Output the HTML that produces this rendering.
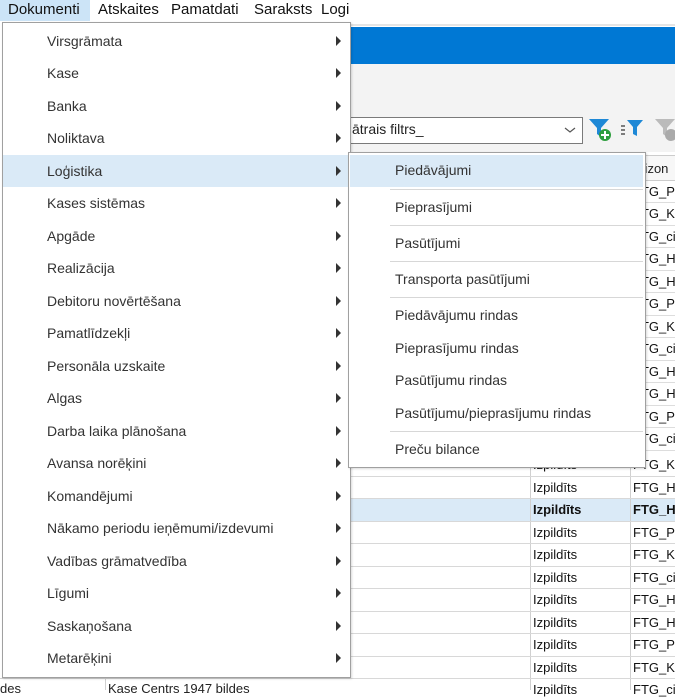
<!DOCTYPE html>
<html><head><meta charset="utf-8"><style>
*{margin:0;padding:0;box-sizing:border-box}
body{width:675px;height:690px;overflow:hidden;background:#fff;font-family:"Liberation Sans",sans-serif;font-size:14px;color:#222;position:relative}
.a{position:absolute}
.mb span{position:absolute;top:1px;font-size:15px;color:#111}
.mi{position:absolute;left:3px;width:346px;height:32px;}
.mi span{position:absolute;left:44px;top:8px;color:#333}
.mi i{position:absolute;left:333px;top:11px;width:0;height:0;border-left:5px solid #333;border-top:5px solid transparent;border-bottom:5px solid transparent}
.si{position:absolute;left:395px;color:#333}
.sep{position:absolute;left:390px;width:253px;height:1px;background:#d7d7d7}
.row{position:absolute;left:350px;width:325px;height:1px;background:#d8d8d8}
.c1{position:absolute;left:533px;font-size:13px;color:#111}
.c2{position:absolute;left:633px;font-size:13px;color:#111;white-space:nowrap}
</style></head><body>
<div class="a" style="left:0;top:0;width:90px;height:21px;background:#cce4f7"></div>
<div class="mb">
<span style="left:8px">Dokumenti</span><span style="left:98px">Atskaites</span><span style="left:171px">Pamatdati</span><span style="left:254px">Saraksts</span><span style="left:321px">Logi</span>
</div>
<div class="a" style="left:340px;top:24px;width:335px;height:2px;background:#e5e5e5"></div>
<div class="a" style="left:340px;top:27px;width:335px;height:37px;background:#0078d4"></div>
<div class="a" style="left:340px;top:64px;width:335px;height:90px;background:#f3f3f3"></div>
<div class="a" style="left:345px;top:117px;width:238px;height:27px;background:#fff;border:1px solid #7a7a7a"></div>
<div class="a" style="left:352px;top:121px;font-size:14px">ātrais filtrs_</div>
<svg class="a" style="left:563px;top:125px" width="14" height="10"><path d="M2 3l5 4 5-4" stroke="#555" fill="none" stroke-width="1.2"/></svg>
<svg class="a" style="left:588px;top:117px" width="26" height="26"><path d="M1 2h20l-8 9v9l-4-3v-6z" fill="#1e88d6"/><circle cx="17" cy="18" r="6" fill="#2e9e3e"/><path d="M17 14v8M13 18h8" stroke="#fff" stroke-width="2"/></svg>
<svg class="a" style="left:620px;top:118px" width="26" height="24"><path d="M7 2h16l-6 7v9l-4-2v-7z" fill="#1e88d6"/><path d="M1 8h4M1 12h4M1 16h4" stroke="#555" stroke-width="1.5"/></svg>
<svg class="a" style="left:654px;top:117px" width="21" height="26"><path d="M1 2h20l-8 9v9l-4-3v-6z" fill="#bbb"/><circle cx="17" cy="18" r="6" fill="#aaa"/></svg>
<div class="a" style="left:350px;top:152px;width:325px;height:540px;background:#fff"></div>
<div class="a" style="left:630px;top:155px;width:45px;height:25px;background:#f7f7f7;border-top:1px solid #ccc"></div>
<div class="a" style="left:633px;top:161px;font-size:13px">orizon</div>
<div class="a" style="left:350px;top:499px;width:325px;height:22px;background:#daeaf7"></div>
<div class="a" style="left:530px;top:455px;width:1px;height:235px;background:#d0d0d0"></div>
<div class="a" style="left:630px;top:155px;width:1px;height:535px;background:#d0d0d0"></div>
<div class="row" style="top:476px"></div><div class="row" style="top:498px"></div><div class="row" style="top:521px"></div><div class="row" style="top:543px"></div><div class="row" style="top:566px"></div><div class="row" style="top:588px"></div><div class="row" style="top:611px"></div><div class="row" style="top:633px"></div><div class="row" style="top:656px"></div><div class="row" style="top:678px"></div>
<div class="a" style="left:630px;top:180px;width:45px;height:1px;background:#ccc"></div>
<div class="a" style="left:630px;top:202px;width:45px;height:1px;background:#ddd"></div>
<div class="a" style="left:630px;top:225px;width:45px;height:1px;background:#ddd"></div>
<div class="a" style="left:630px;top:247px;width:45px;height:1px;background:#ddd"></div>
<div class="a" style="left:630px;top:270px;width:45px;height:1px;background:#ddd"></div>
<div class="a" style="left:630px;top:292px;width:45px;height:1px;background:#ddd"></div>
<div class="a" style="left:630px;top:315px;width:45px;height:1px;background:#ddd"></div>
<div class="a" style="left:630px;top:337px;width:45px;height:1px;background:#ddd"></div>
<div class="a" style="left:630px;top:360px;width:45px;height:1px;background:#ddd"></div>
<div class="a" style="left:630px;top:382px;width:45px;height:1px;background:#ddd"></div>
<div class="a" style="left:630px;top:405px;width:45px;height:1px;background:#ddd"></div>
<div class="a" style="left:630px;top:427px;width:45px;height:1px;background:#ddd"></div>
<div class="a" style="left:630px;top:450px;width:45px;height:1px;background:#ddd"></div>
<div class="c2" style="top:184px">FTG_Po</div><div class="c2" style="top:206px">FTG_Ka</div><div class="c2" style="top:229px">FTG_cit</div><div class="c2" style="top:251px">FTG_Ho</div><div class="c2" style="top:274px">FTG_Ho</div><div class="c2" style="top:296px">FTG_Po</div><div class="c2" style="top:319px">FTG_Ka</div><div class="c2" style="top:341px">FTG_cit</div><div class="c2" style="top:364px">FTG_Ho</div><div class="c2" style="top:386px">FTG_Ho</div><div class="c2" style="top:409px">FTG_Po</div><div class="c2" style="top:431px">FTG_cit</div><div class="c2" style="top:457px">FTG_Ka</div>
<div class="c1" style="top:457px">Izpildīts</div>
<div class="c1" style="top:480px">Izpildīts</div><div class="c2" style="top:480px">FTG_Ho</div>
<div class="c1" style="top:502px;font-weight:bold">Izpildīts</div><div class="c2" style="top:502px;font-weight:bold">FTG_Ho</div>
<div class="c1" style="top:525px">Izpildīts</div><div class="c2" style="top:525px">FTG_Po</div>
<div class="c1" style="top:547px">Izpildīts</div><div class="c2" style="top:547px">FTG_Ka</div>
<div class="c1" style="top:570px">Izpildīts</div><div class="c2" style="top:570px">FTG_cit</div>
<div class="c1" style="top:592px">Izpildīts</div><div class="c2" style="top:592px">FTG_Ho</div>
<div class="c1" style="top:615px">Izpildīts</div><div class="c2" style="top:615px">FTG_Ho</div>
<div class="c1" style="top:637px">Izpildīts</div><div class="c2" style="top:637px">FTG_Po</div>
<div class="c1" style="top:660px">Izpildīts</div><div class="c2" style="top:660px">FTG_Ka</div>
<div class="c1" style="top:682px">Izpildīts</div><div class="c2" style="top:682px">FTG_cit</div>
<div class="a" style="left:0;top:678px;width:350px;height:1px;background:#d0d0d0"></div>
<div class="a" style="left:105px;top:678px;width:1px;height:12px;background:#d0d0d0"></div>
<div class="a" style="left:0;top:681px;font-size:13px">des</div>
<div class="a" style="left:108px;top:681px;font-size:13px">Kase Centrs 1947 bildes</div>
<div class="a" style="left:2px;top:22px;width:349px;height:656px;background:#fff;border:1px solid #a0a0a0;box-shadow:1px 1px 2px rgba(0,0,0,.15)"></div>
<div class="mi" style="top:25px"><span>Virsgrāmata</span><i></i></div>
<div class="mi" style="top:57px"><span>Kase</span><i></i></div>
<div class="mi" style="top:90px"><span>Banka</span><i></i></div>
<div class="mi" style="top:122px"><span>Noliktava</span><i></i></div>
<div class="mi" style="top:155px;background:#daeaf7"><span>Loģistika</span><i></i></div>
<div class="mi" style="top:187px"><span>Kases sistēmas</span><i></i></div>
<div class="mi" style="top:220px"><span>Apgāde</span><i></i></div>
<div class="mi" style="top:252px"><span>Realizācija</span><i></i></div>
<div class="mi" style="top:285px"><span>Debitoru novērtēšana</span><i></i></div>
<div class="mi" style="top:317px"><span>Pamatlīdzekļi</span><i></i></div>
<div class="mi" style="top:350px"><span>Personāla uzskaite</span><i></i></div>
<div class="mi" style="top:382px"><span>Algas</span><i></i></div>
<div class="mi" style="top:415px"><span>Darba laika plānošana</span><i></i></div>
<div class="mi" style="top:447px"><span>Avansa norēķini</span><i></i></div>
<div class="mi" style="top:480px"><span>Komandējumi</span><i></i></div>
<div class="mi" style="top:512px"><span>Nākamo periodu ieņēmumi/izdevumi</span><i></i></div>
<div class="mi" style="top:545px"><span>Vadības grāmatvedība</span><i></i></div>
<div class="mi" style="top:577px"><span>Līgumi</span><i></i></div>
<div class="mi" style="top:610px"><span>Saskaņošana</span><i></i></div>
<div class="mi" style="top:642px"><span>Metarēķini</span><i></i></div>
<div class="a" style="left:348px;top:152px;width:298px;height:316px;background:#fff;border:1px solid #a0a0a0;box-shadow:1px 1px 2px rgba(0,0,0,.15)"></div>
<div class="a" style="left:350px;top:155px;width:293px;height:32px;background:#daeaf7"></div>
<div class="si" style="top:162px">Piedāvājumi</div>
<div class="sep" style="top:189px"></div>
<div class="si" style="top:199px">Pieprasījumi</div>
<div class="sep" style="top:225px"></div>
<div class="si" style="top:235px">Pasūtījumi</div>
<div class="sep" style="top:261px"></div>
<div class="si" style="top:271px">Transporta pasūtījumi</div>
<div class="sep" style="top:297px"></div>
<div class="si" style="top:307px">Piedāvājumu rindas</div>
<div class="si" style="top:340px">Pieprasījumu rindas</div>
<div class="si" style="top:372px">Pasūtījumu rindas</div>
<div class="si" style="top:405px">Pasūtījumu/pieprasījumu rindas</div>
<div class="sep" style="top:431px"></div>
<div class="si" style="top:441px">Preču bilance</div>
</body></html>
